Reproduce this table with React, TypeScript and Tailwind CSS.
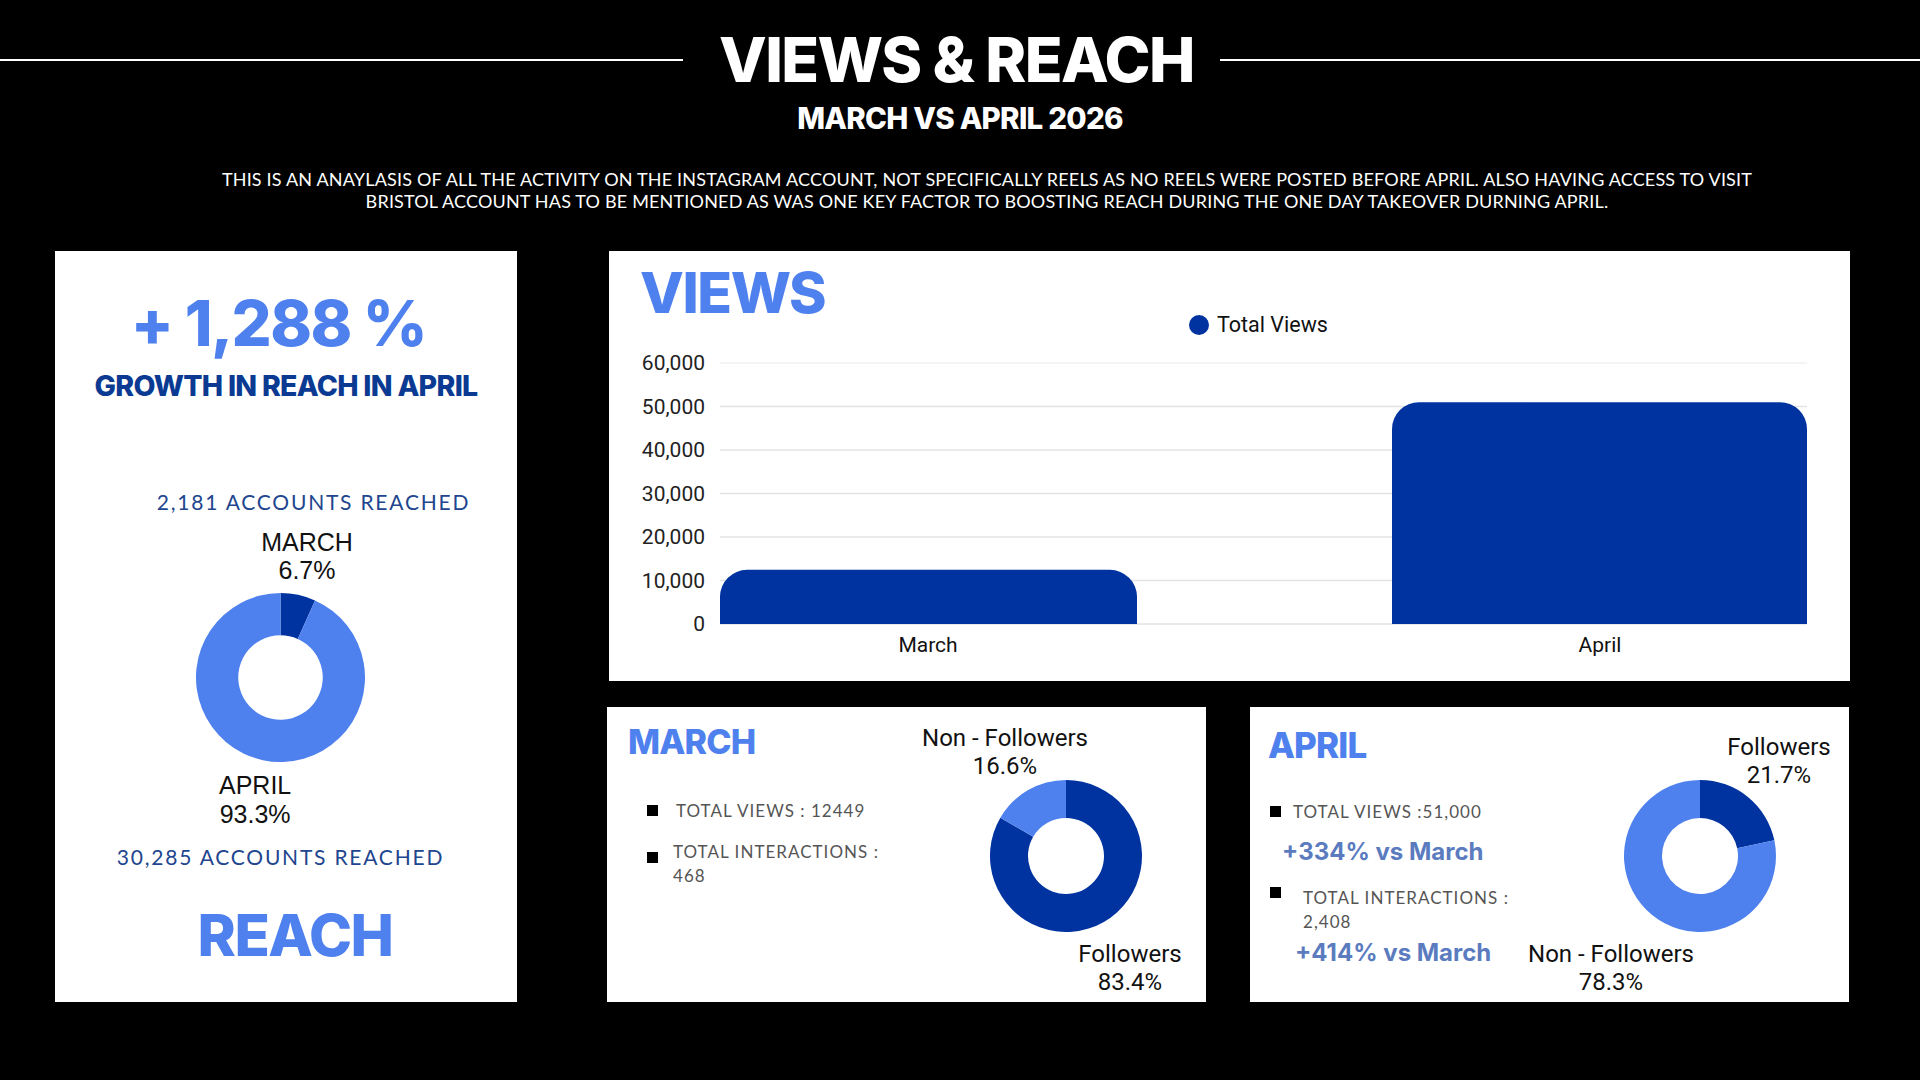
import React from "react";

const LIGHT = "#4f81ee";
const DARK = "#0033a0";

type Slice = { value: number; color: string };

// arc path for one donut slice, fractions measured clockwise from 12 o'clock
function slicePath(cx: number, cy: number, R: number, r: number, a: number, b: number) {
  const p = (f: number, rad: number) => {
    const t = f * Math.PI * 2 - Math.PI / 2;
    return [cx + rad * Math.cos(t), cy + rad * Math.sin(t)];
  };
  const large = b - a > 0.5 ? 1 : 0;
  const [x1, y1] = p(a, R);
  const [x2, y2] = p(b, R);
  const [x3, y3] = p(b, r);
  const [x4, y4] = p(a, r);
  return `M${x1} ${y1} A${R} ${R} 0 ${large} 1 ${x2} ${y2} L${x3} ${y3} A${r} ${r} 0 ${large} 0 ${x4} ${y4} Z`;
}

function DonutSlices({ cx, cy, size, slices }: { cx: number; cy: number; size: number; slices: Slice[] }) {
  let acc = 0;
  const total = slices.reduce((s, x) => s + x.value, 0);
  return (
    <g>
      {slices.map((s, i) => {
        const a = acc / total;
        acc += s.value;
        const b = acc / total;
        return <path key={i} d={slicePath(cx, cy, size / 2, size / 4, a, b)} fill={s.color} />;
      })}
    </g>
  );
}

function ReachCard() {
  return (
    <div className="w-[462px] h-[751px] bg-white flex flex-col">
      <div className="pt-[41px] pr-[15px] text-center font-['Inter',sans-serif] font-extrabold text-[63px] leading-none tracking-tight text-[#4f81ee]">
        + 1,288 %
      </div>
      <div className="mt-[17px] text-center font-['Inter',sans-serif] font-extrabold text-[28.5px] leading-[28px] tracking-tight text-[#0b3a93]">
        GROWTH IN REACH IN APRIL
      </div>
      <div className="mt-[90px] pl-[55px] text-center font-['Lato',sans-serif] text-[21px] leading-[24px] tracking-[0.085em] text-[#21458e]">
        2,181 ACCOUNTS REACHED
      </div>
      <div className="mt-[14px] pl-[42px] text-center font-['Liberation_Sans',Arial,sans-serif] text-[25px] leading-[28px] text-[#111]">
        <div>MARCH</div>
        <div>6.7%</div>
      </div>
      <svg className="mt-[9px] ml-[141px]" width={169} height={169} viewBox="0 0 169 169">
        <DonutSlices
          cx={84.5}
          cy={84.5}
          size={169}
          slices={[
            { value: 6.7, color: DARK },
            { value: 93.3, color: LIGHT },
          ]}
        />
      </svg>
      <div className="mt-[9px] ml-[164px] w-fit text-center font-['Liberation_Sans',Arial,sans-serif] text-[25px] leading-[29px] text-[#111]">
        <div>APRIL</div>
        <div>93.3%</div>
      </div>
      <div className="mt-[16px] pr-[11px] text-center font-['Lato',sans-serif] text-[21px] leading-[24px] tracking-[0.085em] text-[#21458e]">
        30,285 ACCOUNTS REACHED
      </div>
      <div className="mt-[37px] pl-[18px] text-center font-['Inter',sans-serif] font-extrabold text-[58px] leading-none tracking-tight text-[#4f81ee]">
        REACH
      </div>
    </div>
  );
}

const GRID_TOP = 17;
const GRID_ZERO = 278;
const PER = (GRID_ZERO - GRID_TOP) / 60000;

function barPath(x0: number, x1: number, value: number, r: number) {
  const top = GRID_ZERO - value * PER;
  return `M${x0} ${GRID_ZERO} V${top + r} A${r} ${r} 0 0 1 ${x0 + r} ${top} H${x1 - r} A${r} ${r} 0 0 1 ${x1} ${top + r} V${GRID_ZERO} Z`;
}

function ViewsCard() {
  const ticks = [60000, 50000, 40000, 30000, 20000, 10000, 0];
  return (
    <div className="w-[1241px] h-[430px] ml-[2px] bg-white flex flex-col">
      <div className="h-[95px] flex items-start">
        <div className="w-[580px] pt-[13px] pl-[31px] font-['Inter',sans-serif] font-extrabold text-[57px] leading-none tracking-tight text-[#4f81ee]">
          VIEWS
        </div>
        <div className="mt-[62px] flex items-center gap-[8px] font-['Roboto',sans-serif] text-[21.5px] leading-[24px] text-[#111]">
          <span className="w-[20px] h-[20px] rounded-full bg-[#0033a0]" />
          <span>Total Views</span>
        </div>
      </div>
      <svg width={1241} height={335} viewBox="0 0 1241 335" className="overflow-visible">
        {ticks.map((t) => {
          const y = GRID_ZERO - t * PER;
          return (
            <g key={t}>
              <line x1={111} x2={1198} y1={y} y2={y} stroke={t === 60000 ? "#f0f0f0" : "#e3e3e3"} strokeWidth={1.5} />
              <text
                x={96}
                y={y}
                textAnchor="end"
                dominantBaseline="central"
                fontFamily="Roboto, sans-serif"
                fontSize={21}
                fill="#222"
              >
                {t.toLocaleString("en-US")}
              </text>
            </g>
          );
        })}
        <path d={barPath(111, 528, 12449, 27)} fill={DARK} />
        <path d={barPath(783, 1198, 51000, 27)} fill={DARK} />
        <text x={319} y={299} textAnchor="middle" dominantBaseline="central" fontFamily="Roboto, sans-serif" fontSize={21} fill="#111">
          March
        </text>
        <text x={991} y={299} textAnchor="middle" dominantBaseline="central" fontFamily="Roboto, sans-serif" fontSize={21} fill="#111">
          April
        </text>
      </svg>
    </div>
  );
}

function ChartLabel({ x, y, lines }: { x: number; y: number; lines: string[] }) {
  return (
    <g>
      {lines.map((l, i) => (
        <text
          key={l}
          x={x}
          y={y + i * 28}
          textAnchor="middle"
          dominantBaseline="central"
          fontFamily="Roboto, sans-serif"
          fontSize={24}
          fill="#111"
        >
          {l}
        </text>
      ))}
    </g>
  );
}

const bulletText = "font-['Lato',sans-serif] text-[17px] leading-[24px] tracking-[0.06em] text-[#555]";
const compareText = "font-['Inter',sans-serif] font-bold text-[24px] leading-[30px] text-[#5b7bbf]";

function MarchCard() {
  return (
    <div className="w-[599px] h-[295px] bg-white flex">
      <div className="w-[250px] flex flex-col">
        <div className="pt-[18px] pl-[21px] font-['Inter',sans-serif] font-extrabold text-[34px] leading-none tracking-tight text-[#4f81ee]">
          MARCH
        </div>
        <div className="mt-[40px] pl-[40px] flex items-center gap-[18px]">
          <span className="w-[11px] h-[11px] bg-black shrink-0" />
          <span className={`${bulletText} whitespace-nowrap`}>TOTAL VIEWS : 12449</span>
        </div>
        <div className="mt-[17px] pl-[40px] flex items-start gap-[15px]">
          <span className="mt-[12px] w-[11px] h-[11px] bg-black shrink-0" />
          <span className={`${bulletText} whitespace-nowrap`}>
            TOTAL INTERACTIONS :<br />
            468
          </span>
        </div>
      </div>
      <svg width={349} height={295} viewBox="0 0 349 295" className="overflow-visible">
        <DonutSlices
          cx={209}
          cy={149}
          size={152}
          slices={[
            { value: 83.4, color: DARK },
            { value: 16.6, color: LIGHT },
          ]}
        />
        <ChartLabel x={148} y={31} lines={["Non - Followers", "16.6%"]} />
        <ChartLabel x={273} y={247} lines={["Followers", "83.4%"]} />
      </svg>
    </div>
  );
}

function AprilCard() {
  return (
    <div className="w-[599px] h-[295px] bg-white flex">
      <div className="w-[250px] flex flex-col">
        <div className="pt-[21px] pl-[18px] font-['Inter',sans-serif] font-extrabold text-[35px] leading-none tracking-tight text-[#4f81ee]">
          APRIL
        </div>
        <div className="mt-[37px] pl-[20px] flex items-center gap-[12px]">
          <span className="w-[11px] h-[11px] bg-black shrink-0" />
          <span className={`${bulletText} whitespace-nowrap`}>TOTAL VIEWS :51,000</span>
        </div>
        <div className={`mt-[13px] pl-[32px] whitespace-nowrap ${compareText}`}>+334% vs March</div>
        <div className="mt-[19px] pl-[20px] flex items-start gap-[22px]">
          <span className="mt-[1px] w-[11px] h-[11px] bg-black shrink-0" />
          <span className={`${bulletText} whitespace-nowrap`}>
            TOTAL INTERACTIONS :<br />
            2,408
          </span>
        </div>
        <div className={`mt-[4px] pl-[45px] whitespace-nowrap ${compareText}`}>+414% vs March</div>
      </div>
      <svg width={349} height={295} viewBox="0 0 349 295" className="overflow-visible">
        <DonutSlices
          cx={200}
          cy={149}
          size={152}
          slices={[
            { value: 21.7, color: DARK },
            { value: 78.3, color: LIGHT },
          ]}
        />
        <ChartLabel x={279} y={40} lines={["Followers", "21.7%"]} />
        <ChartLabel x={111} y={247} lines={["Non - Followers", "78.3%"]} />
      </svg>
    </div>
  );
}

export default function App() {
  return (
    <div className="w-[1920px] h-[1080px] bg-black overflow-hidden flex flex-col">
      {/* title row with rules either side */}
      <div className="mt-[29px] flex items-center">
        <div className="w-[683px] h-[2px] bg-white" />
        <h1 className="ml-[36px] mr-[26px] font-['Inter',sans-serif] font-extrabold text-[62px] leading-none tracking-tight text-white whitespace-nowrap">
          VIEWS &amp; REACH
        </h1>
        <div className="flex-1 h-[2px] bg-white" />
      </div>
      <div className="mt-[13px] text-center font-['Inter',sans-serif] font-extrabold text-[29.5px] leading-none tracking-tight text-white">
        MARCH VS APRIL 2026
      </div>
      <p className="mt-[34px] pl-[54px] text-center font-['Lato',sans-serif] text-[18px] leading-[22px] tracking-[0.01em] text-white">
        THIS IS AN ANAYLASIS OF ALL THE ACTIVITY ON THE INSTAGRAM ACCOUNT, NOT SPECIFICALLY REELS AS NO REELS WERE POSTED BEFORE APRIL. ALSO HAVING ACCESS TO VISIT
        <br />
        BRISTOL ACCOUNT HAS TO BE MENTIONED AS WAS ONE KEY FACTOR TO BOOSTING REACH DURING THE ONE DAY TAKEOVER DURNING APRIL.
      </p>

      <div className="mt-[39px] pl-[55px] flex gap-[90px]">
        <ReachCard />
        <div className="w-[1243px] flex flex-col gap-[26px]">
          <ViewsCard />
          <div className="flex gap-[44px]">
            <MarchCard />
            <AprilCard />
          </div>
        </div>
      </div>
    </div>
  );
}
